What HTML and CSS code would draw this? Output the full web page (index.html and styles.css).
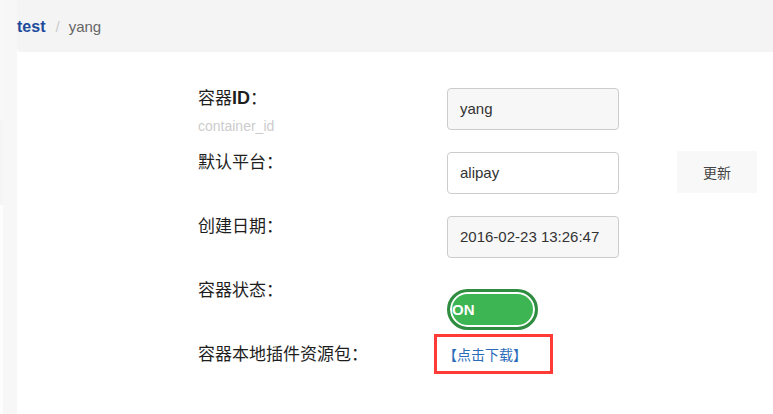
FILE: index.html
```html
<!DOCTYPE html>
<html lang="zh">
<head>
<meta charset="utf-8">
<title>容器</title>
<link rel="stylesheet" href="styles.css">
</head>
<body>
<div class="page">
  <aside class="side">
    <div class="seg seg-a"></div>
    <div class="seg seg-b"></div>
    <div class="seg seg-c"></div>
  </aside>
  <main class="main">
    <nav class="crumb">
      <a class="crumb-link">test</a><span class="crumb-sep">/</span><span class="crumb-cur">yang</span>
    </nav>
    <form class="form">
      <div class="row">
        <div class="label-col">
          <div class="label">容器<span class="latin">ID</span>：</div>
          <div class="hint">container_id</div>
        </div>
        <div class="field readonly">yang</div>
      </div>
      <div class="row">
        <div class="label-col"><div class="label">默认平台：</div></div>
        <div class="field">alipay</div>
        <div class="btn">更新</div>
      </div>
      <div class="row">
        <div class="label-col"><div class="label">创建日期：</div></div>
        <div class="field readonly">2016-02-23 13:26:47</div>
      </div>
      <div class="row">
        <div class="label-col"><div class="label">容器状态：</div></div>
        <div class="toggle-wrap"><div class="toggle">ON</div></div>
      </div>
      <div class="row">
        <div class="label-col"><div class="label">容器本地插件资源包：</div></div>
        <div class="link-wrap"><a class="download">【点击下载】</a></div>
      </div>
    </form>
  </main>
</div>
</body>
</html>
```

FILE: styles.css
```css
html, body {
  margin: 0;
  padding: 0;
  background: #ffffff;
}
body {
  font-family: "Liberation Sans", "Noto Sans CJK SC", sans-serif;
  color: #333333;
}
.page {
  display: flex;
  width: 773px;
  height: 414px;
  overflow: hidden;
}
.side {
  width: 17px;
  flex: none;
  display: flex;
  flex-direction: column;
}
.seg {
  box-sizing: border-box;
  background: #f7f7f7;
  border-left: 3px solid #ffffff;
}
.seg-a { height: 120px; border-left-color: #f8f8f8; }
.seg-b { height: 85px; border-left-color: #f5f5f5; }
.seg-c { flex: 1; border-left-color: #fdfdfd; }
.main {
  flex: 1;
  background: #ffffff;
}
.crumb {
  height: 52px;
  line-height: 54px;
  background: #f4f4f4;
  border-bottom-left-radius: 4px;
  font-size: 15px;
}
.crumb-link {
  color: #1d4b9c;
  font-weight: bold;
  font-size: 16px;
}
.crumb-sep {
  color: #cccccc;
  margin: 0 9px 0 10px;
}
.crumb-cur {
  color: #666666;
}
.form {
  padding: 36px 0 0 181px;
}
.row {
  display: flex;
  height: 64px;
}
.label-col {
  width: 249px;
  flex: none;
}
.label {
  font-family: "Noto Sans CJK SC", "Liberation Sans", sans-serif;
  font-size: 17px;
  font-weight: 400;
  line-height: 20px;
  margin-top: -1px;
  color: #1e1e1e;
}
.latin {
  font-family: "Liberation Sans", sans-serif;
  font-weight: bold;
  font-size: 18px;
}
.hint {
  font-size: 14px;
  line-height: 16px;
  margin-top: 10px;
  color: #cccccc;
}
.field {
  box-sizing: border-box;
  width: 172px;
  height: 42px;
  border: 1px solid #cccccc;
  border-radius: 4px;
  background: #ffffff;
  padding: 0 12px;
  font-size: 15px;
  line-height: 40px;
  color: #333333;
  flex: none;
}
.field.readonly {
  background: #f7f7f7;
}
.btn {
  margin-left: 58px;
  margin-top: -1px;
  width: 80px;
  height: 42px;
  background: #f8f8f8;
  font-family: "Noto Sans CJK SC", sans-serif;
  font-size: 14px;
  line-height: 42px;
  text-align: center;
  color: #444444;
}
.toggle-wrap {
  padding-top: 9px;
}
.toggle {
  box-sizing: border-box;
  width: 91px;
  height: 41px;
  border-radius: 21px;
  background: #3db553;
  border: 3px solid #2f8c41;
  box-shadow: inset 0 0 0 2px #ffffff;
  color: #ffffff;
  font-weight: bold;
  font-size: 15px;
  line-height: 35px;
  padding-left: 2px;
}
.link-wrap {
  margin-top: -10px;
  margin-left: -13px;
}
.download {
  display: inline-block;
  box-sizing: border-box;
  width: 119px;
  height: 40px;
  border: 3px solid #ff3b36;
  padding: 0 0 0 6px;
  font-family: "Noto Sans CJK SC", sans-serif;
  font-size: 14px;
  line-height: 34px;
  color: #2b6cb8;
}
```
